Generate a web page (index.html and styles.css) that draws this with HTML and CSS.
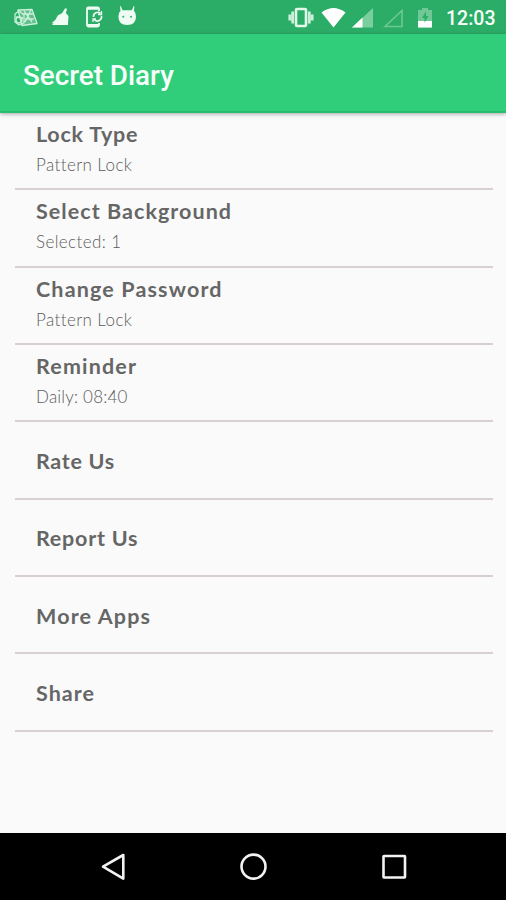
FILE: index.html
```html
<!DOCTYPE html>
<html lang="en">
<head>
<meta charset="utf-8">
<title>Secret Diary</title>
<link rel="stylesheet" href="styles.css">
</head>
<body>
<div class="screen">
  <header class="status">
    <svg class="notifications" width="140" height="34" viewBox="0 0 140 34" aria-hidden="true">
      <g fill="none" stroke="#c9f0d8" stroke-width="1.3" stroke-linejoin="round">
        <path d="M18 10l14-.5 5 14-15 2z" fill="#62bf8c"/>
        <path d="M15 14l4-3 5 4v8l-5 2-4-3zM16 17l7 1M24 11l8 11M31 10l-6 12M22 14l11 0M25 19l9 0"/>
        <circle cx="19" cy="20" r="3"/>
      </g>
      <path d="M65 8.500q2-1 1.800 1.200l-1 3.300 2.700 3-.6 9H52l1.500-2-2 .3q4.500-3 6.500-8l4-2z" fill="#effcf3"/>
      <g fill="none" stroke="#effcf3" stroke-width="1.800">
        <path d="M99 11V9q0-1.500-1.500-1.500h-9Q87 7.500 87 9v16q0 1.500 1.500 1.500h9q1.500 0 1.500-1.500v-2"/>
        <path d="M87 8.500h12M87 25.200h12" stroke-width="2.500"/>
        <path d="M93.500 17a4.200 4.200 0 0 1 7-3.500M101.500 16a4.200 4.200 0 0 1-7 3.800" stroke-width="1.700"/>
        <path d="M101.500 11v3.500H98M93 22v-3h3" stroke-width="1.300"/>
      </g>
      <path d="M120.800 6l1.700 4.200h9.400l1.700-4.200.8.400-.5 4.300q2.100 2 2.100 5.800 0 8.500-8.800 8.500t-8.800-8.500q0-3.800 2.100-5.800l-.5-4.300z" fill="#effcf3"/>
      <circle cx="123.300" cy="16.800" r="1" fill="#2fb26c"/><circle cx="131" cy="16.800" r="1" fill="#2fb26c"/>
    </svg>
    <svg class="signals" width="156" height="34" viewBox="0 0 156 34" aria-hidden="true">
      <rect x="16" y="9" width="10" height="17" rx="1" fill="none" stroke="#e2f8e9" stroke-width="2.600"/>
      <path d="M12.700 11.500v12M29.300 11.500v12M9.800 14.500v6M32.200 14.500v6" stroke="#c9f0d8" stroke-width="2.800"/>
      <path d="M41.500 12.500Q53.500 3.500 65.500 12.500L53.500 27.500z" fill="#fff"/>
      <path d="M72 27.500L93 8v19.500z" fill="#7bcf9f"/><path d="M72 27.500l10.500-10v10z" fill="#fff"/>
      <path d="M105 26.500L122 10.500v16z" fill="none" stroke="#70c894" stroke-width="1.600"/>
      <path d="M138 10h4V8h6v2h4v17.500h-14z" fill="#70c894"/>
      <path d="M138 21h14v6.500h-14z" fill="#fff"/><path d="M145.500 12l-3.500 6h2.500v4.500l4-6.500H146v-4z" fill="#2cad67"/>
    </svg>
    <span class="clock">12:03</span>
  </header>
  <div class="toolbar"><h1>Secret Diary</h1></div>
  <main class="settings">
    <section class="row double"><h2 class="lock">Lock Type</h2><p>Pattern Lock</p></section>
    <section class="row double"><h2 class="background">Select Background</h2><p class="selected">Selected: 1</p></section>
    <section class="row double"><h2 class="password">Change Password</h2><p>Pattern Lock</p></section>
    <section class="row double"><h2 class="reminder">Reminder</h2><p class="daily">Daily: 08:40</p></section>
    <section class="row"><h2 class="rate">Rate Us</h2></section>
    <section class="row"><h2 class="report">Report Us</h2></section>
    <section class="row"><h2 class="more">More Apps</h2></section>
    <section class="row"><h2 class="share">Share</h2></section>
  </main>
  <nav class="navbar">
    <svg width="506" height="67" viewBox="0 0 506 67" fill="none" stroke="#f2f2f2" stroke-width="2.600" stroke-linejoin="round" aria-hidden="true">
      <path d="M103 33.700L123.300 22v23.600z"/>
      <circle cx="253.500" cy="33.600" r="12"/>
      <rect x="383.500" y="23" width="21.500" height="21.500" rx=".5"/>
    </svg>
  </nav>
</div>
</body>
</html>
```
FILE: styles.css
```css
* { box-sizing: border-box; }
body { margin: 0; background: #fafafa; }
h1, h2, p { margin: 0; }
svg { display: block; flex: none; }
.screen { width: 506px; height: 900px; display: flex; flex-direction: column; background: #fafafa; overflow: hidden; }
.status { flex: none; height: 34px; display: flex; align-items: center; background: #2cad67; color: #f5fff8; }
.signals { margin-left: 140px; }
.clock { margin-left: 10px; padding-top: 3px; font: 500 19.500px/24px Roboto, sans-serif; }
.toolbar { flex: none; height: 79px; display: flex; align-items: center; padding: 6px 23px 0; background: #30ce7a; border-bottom: 2px solid #2abd70; box-shadow: 0 1px 4px rgba(0, 0, 0, .35); color: #f8fffa; }
.toolbar h1 { font: 500 27.800px/34px Roboto, sans-serif; }
.settings { flex: 1; padding: 0 13px 0 15px; }
.row { height: 77.35px; display: flex; flex-direction: column; justify-content: center; padding: 3px 21px 0; border-bottom: 2px solid #d8d0d2; color: #666; font-family: Lato, sans-serif; }
.double { justify-content: flex-start; padding-top: 8px; }
.row h2 { font-size: 21.500px; line-height: 27px; font-weight: 700; letter-spacing: .75px; white-space: nowrap; }
.row h2.background, .row h2.password, .row h2.reminder, .row h2.more { letter-spacing: 1.15px; }
.row h2.background { letter-spacing: 1.05px; }
.row h2.rate { letter-spacing: .7px; }
.row h2.share { letter-spacing: 1px; }
.row p { margin-top: 6px; font-size: 17px; line-height: 22px; font-weight: 300; letter-spacing: .4px; color: #5c5c5c; white-space: nowrap; }
.row p.daily { letter-spacing: .2px; }
.navbar { flex: none; height: 67px; background: #000; }
```
